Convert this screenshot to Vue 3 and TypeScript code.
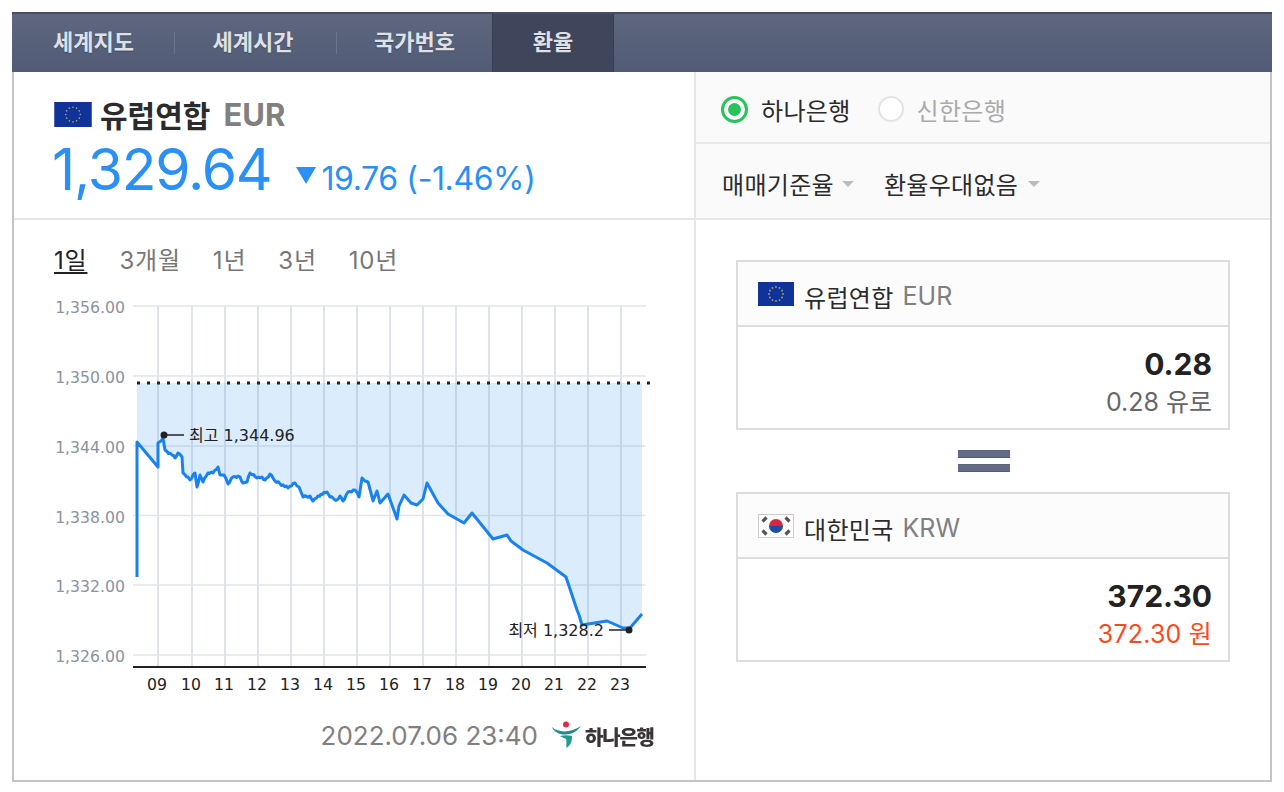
<script setup lang="ts">
import { computed } from 'vue'

const tabs = [
  { label: '세계지도', active: false },
  { label: '세계시간', active: false },
  { label: '국가번호', active: false },
  { label: '환율', active: true },
]
const periods = ['1일', '3개월', '1년', '3년', '10년']

const yTicks = [
  { y: 306, label: '1,356.00' },
  { y: 376, label: '1,350.00' },
  { y: 446, label: '1,344.00' },
  { y: 515.5, label: '1,338.00' },
  { y: 585, label: '1,332.00' },
  { y: 655, label: '1,326.00' },
]
const xTicks = ['09','10','11','12','13','14','15','16','17','18','19','20','21','22','23'].map((label, i) => ({
  label,
  x: i === 0 ? 158 : 192 + (i - 1) * 33,
}))

const pts: [number, number][] = [
  [137,442],[158,467],[158,443],[161,441],[163,438],[165,450],[172,455],[175,458],[178,453],[182,457],[183,473],[188,477],[190,480],[195,473],[197,487],[200,475],[203,482],[208,473],[213,473],[218,467],[220,475],[224,475],[228,484],[233,477],[240,477],[243,483],[247,482],[250,473],[257,478],[262,477],[265,480],[270,474],[275,481],[288,488],[295,483],[299,487],[303,497],[310,496],[313,501],[318,496],[327,492],[330,497],[337,500],[340,496],[343,501],[348,492],[355,490],[359,497],[362,478],[365,481],[368,482],[371,493],[373,501],[377,491],[380,503],[388,494],[397,519],[399,506],[404,495],[411,503],[417,505],[423,499],[427,483],[438,503],[448,514],[464,523],[472,513],[493,539],[507,535],[511,541],[523,550],[547,563],[566,577],[577,610],[579,615],[582,625],[607,621],[623,628],[630,628],[642,614],
]

// The reference line is a dense minute series: fine jitter is added in the busy morning stretch.
const dense = computed(() => {
  const out: [number, number][] = []
  pts.forEach((p, i) => {
    const next = pts[i + 1]
    out.push(p)
    if (!next || p[0] < 165 || p[0] > 355) return
    const steps = Math.floor((next[0] - p[0]) / 1.5)
    for (let s = 1; s < steps; s++) {
      const t = s / steps
      const wobble = ((s * 7 + i * 3) % 5) / 2 - 1
      out.push([p[0] + (next[0] - p[0]) * t, p[1] + (next[1] - p[1]) * t + wobble])
    }
  })
  return out
})

const linePts = computed(() => '137,577 ' + dense.value.map(p => p.join(',')).join(' '))
const fillPts = computed(() => '137,383 ' + pts.map(p => p.join(',')).join(' ') + ' 642,383')

const stars = Array.from({ length: 12 }, (_, i) => {
  const a = (i / 12) * Math.PI * 2
  return { cx: 18 + Math.cos(a) * 7, cy: 12 + Math.sin(a) * 7 }
})
</script>

<template>
  <div class="page">
    <div class="frame">
      <nav class="tabs">
        <template v-for="(t, i) in tabs" :key="t.label">
          <span class="tab" :class="{ active: t.active, ['tab' + i]: true }">{{ t.label }}</span>
        </template>
      </nav>
      <div class="grid">
        <section class="summary">
          <div class="title">
            <svg class="flag-big" viewBox="0 0 36 24">
              <rect width="36" height="24" fill="#0f3399" />
              <circle v-for="(s, i) in stars" :key="i" :cx="s.cx" :cy="s.cy" r="0.8" fill="#a9a968" />
            </svg>
            <span class="name">유럽연합</span>
            <span class="code">EUR</span>
          </div>
          <div class="rate">
            <span class="value">1,329.64</span>
            <svg class="down" viewBox="0 0 20 17"><path d="M0 0H20L10 17Z" fill="#2b90f5" /></svg>
            <span class="delta">19.76 (-1.46%)</span>
          </div>
        </section>

        <section class="options">
          <div class="opt-row banks">
            <span class="radio on"><i></i></span>
            <span class="bank">하나은행</span>
            <span class="radio"></span>
            <span class="bank off">신한은행</span>
          </div>
          <div class="opt-row selects">
            <span class="sel">매매기준율</span><span class="caret"></span>
            <span class="sel second">환율우대없음</span><span class="caret wide"></span>
          </div>
        </section>

        <section class="chart-col">
          <div class="periods">
            <span v-for="(p, i) in periods" :key="p" class="period" :class="{ cur: i === 0 }">{{ p }}</span>
          </div>
          <svg class="chart" width="682" height="412" viewBox="14 290 682 412">
            <line v-for="t in yTicks" :key="t.y" x1="133" x2="646" :y1="t.y" :y2="t.y" class="grid-line" />
            <line v-for="t in xTicks" :key="t.x" :x1="t.x" :x2="t.x" y1="306" y2="666" class="grid-v" />
            <polygon :points="fillPts" fill="#2b8ef0" fill-opacity="0.17" />
            <line x1="137" x2="650" y1="383" y2="383" class="dots" />
            <polyline :points="linePts" class="price" />
            <line x1="133" x2="646" y1="667" y2="667" class="axis" />
            <text v-for="t in yTicks" :key="t.label" x="125" :y="t.y + 7" text-anchor="end" class="y-label">{{ t.label }}</text>
            <text v-for="t in xTicks" :key="t.label" :x="t.x - 1" y="690" text-anchor="middle" class="x-label">{{ t.label }}</text>
            <line x1="164" x2="184" y1="435" y2="435" class="lead" />
            <circle cx="164" cy="435" r="3.5" fill="#222" />
            <text x="189" y="441" class="mark">최고 1,344.96</text>
            <line x1="609" x2="628" y1="630" y2="630" class="lead" />
            <circle cx="629" cy="630" r="3.5" fill="#222" />
            <text x="604" y="636" text-anchor="end" class="mark">최저 1,328.2</text>
          </svg>
          <div class="foot">
            <span class="stamp">2022.07.06 23:40</span>
            <span class="logo">
              <svg width="32" height="28" viewBox="0 0 32 28">
                <circle cx="15" cy="3.5" r="3" fill="#e5264f" />
                <path d="M1 6C7 12 20 12 30 5C25 12 19 13 15 13.500C9 14 3 11 1 6Z" fill="#1c8f8c" />
                <path d="M9 15C13 14 17 14 21 15C21 20 20 24 15.500 27C15 24 16 20 15 18C13 17 10 16 9 15Z" fill="#1c9a94" />
              </svg>
              <span class="logo-text">하나은행</span>
            </span>
          </div>
        </section>

        <section class="convert">
          <div class="card">
            <div class="card-head">
              <svg class="flag" viewBox="0 0 36 24">
                <rect width="36" height="24" fill="#0f3399" />
                <circle v-for="(s, i) in stars" :key="i" :cx="s.cx" :cy="s.cy" r="0.9" fill="#a9a968" />
              </svg>
              <span class="card-name">유럽연합</span>
              <span class="card-code">EUR</span>
            </div>
            <div class="card-body">
              <div class="amount">0.28</div>
              <div class="sub">0.28 유로</div>
            </div>
          </div>
          <div class="equals"><i></i><i></i></div>
          <div class="card">
            <div class="card-head">
              <svg class="flag" viewBox="0 0 36 24">
                <rect x="0.500" y="0.500" width="35" height="23" fill="#fff" stroke="#ccc" />
                <path d="M11 12A7 7 0 0 1 25 12Z" fill="#d8263c" />
                <path d="M11 12A7 7 0 0 0 25 12Z" fill="#1f4ba0" />
                <g stroke="#555" stroke-width="3.200">
                  <path d="M4.500 7.500L8.500 3.500" /><path d="M27.500 3.500L31.500 7.500" />
                  <path d="M4.500 16.500L8.500 20.500" /><path d="M27.500 20.500L31.500 16.500" />
                </g>
              </svg>
              <span class="card-name">대한민국</span>
              <span class="card-code">KRW</span>
            </div>
            <div class="card-body">
              <div class="amount">372.30</div>
              <div class="sub red">372.30 원</div>
            </div>
          </div>
        </section>
      </div>
    </div>
  </div>
</template>

<style>
html, body { margin: 0; background: #fff; }
</style>

<style scoped>
.page {
  padding: 12px;
  width: 1260px;
  font-family: Inter, "Noto Sans CJK KR", sans-serif;
  color: #222;
}
.frame {
  width: 1260px;
  height: 770px;
  box-sizing: border-box;
  border: 2px solid #c4c4c4;
  border-top: 0;
  display: flex;
  flex-direction: column;
}
.tabs {
  height: 60px;
  margin: 0 -2px;
  box-sizing: border-box;
  border-top: 2px solid #474e63;
  background: linear-gradient(#5e677f, #525b75);
  display: flex;
  flex: none;
}
.tab {
  box-sizing: border-box;
  width: 162px;
  text-align: center;
  line-height: 56px;
  font-size: 22px;
  font-weight: 700;
  color: #dfe1e6;
  position: relative;
  text-shadow: 0 1px 1px rgba(30, 35, 50, 0.35);
}
.tab0 { width: 163px; }
.tab1 { padding-right: 6px; }
.tab0::after, .tab1::after {
  content: '';
  position: absolute;
  right: 0;
  top: 18px;
  height: 22px;
  width: 1px;
  background: #6d758b;
}
.tab2 { width: 155px; }
.tab.active {
  width: 122px;
  background: #3f465c;
  box-shadow: inset 1px 0 #373d50, inset -1px 0 #373d50;
}
.grid {
  flex: 1;
  min-height: 0;
  display: grid;
  grid-template-columns: 682px 1fr;
  grid-template-rows: 148px 1fr;
}
.summary {
  box-sizing: border-box;
  border-bottom: 2px solid #e6e6e6;
  border-right: 2px solid #e6e6e6;
  padding: 24px 0 0 40px;
}
.title { display: flex; align-items: center; height: 36px; }
.flag-big { width: 38px; height: 25px; margin-right: 8px; }
.name { font-size: 30px; font-weight: 700; color: #2b2b2b; }
.code { font-size: 31px; font-weight: 700; color: #808080; margin-left: 13px; }
.rate { display: flex; align-items: baseline; height: 58px; margin-top: 3px; margin-left: -2px; color: #2b90f5; }
.value { font-size: 57px; font-weight: 400; letter-spacing: -1.2px; }
.down { width: 20px; height: 17px; margin: 0 6px 0 24px; transform: translateY(-6px); }
.delta { font-size: 32px; letter-spacing: -0.4px; }
.options {
  box-sizing: border-box;
  background: #fafafa;
  border-bottom: 2px solid #e6e6e6;
}
.opt-row { display: flex; align-items: center; padding-left: 25px; box-sizing: border-box; }
.banks { height: 72px; padding-top: 4px; border-bottom: 2px solid #e8e8e8; }
.selects { height: 74px; padding-left: 26px; padding-top: 4px; }
.radio {
  width: 22px;
  height: 22px;
  border-radius: 50%;
  border: 2px solid #e3e3e3;
  background: #fff;
  display: flex;
  align-items: center;
  justify-content: center;
  margin-right: 13px;
  flex: none;
}
.radio.on { border: 3px solid #2ac25b; width: 21px; height: 21px; }
.radio i { width: 13px; height: 13px; border-radius: 50%; background: #2ac25b; }
.bank { font-size: 24px; letter-spacing: 0.3px; margin-right: 27px; color: #2b2b2b; }
.bank.off { color: #aaa; }
.sel { font-size: 24px; letter-spacing: 0.3px; color: #2b2b2b; }
.sel.second { margin-left: 30px; }
.caret {
  width: 0;
  height: 0;
  border-left: 6.5px solid transparent;
  border-right: 6.5px solid transparent;
  border-top: 6px solid #bcbcbc;
  margin: 2px 0 0 8px;
}
.caret.wide { margin-left: 10px; }
.chart-col {
  border-right: 2px solid #e6e6e6;
  display: flex;
  flex-direction: column;
  min-height: 0;
}
.periods {
  height: 40px;
  margin-top: 18px;
  margin-bottom: 12px;
  padding-left: 40px;
  display: flex;
  gap: 32px;
  align-items: center;
  font-size: 24px;
  letter-spacing: 0.8px;
  color: #777;
  flex: none;
}
.period.cur { color: #222; text-decoration: underline; text-underline-offset: 3px; }
.chart { display: block; flex: none; }
.grid-line { stroke: #e3e5ea; stroke-width: 1.5; }
.grid-v { stroke: #dfe3ea; stroke-width: 2; }
.dots { stroke: #222; stroke-width: 3; stroke-dasharray: 3 7; }
.price { fill: none; stroke: #1a82ec; stroke-width: 3; stroke-linejoin: round; }
.axis { stroke: #222; stroke-width: 2; }
.lead { stroke: #222; stroke-width: 1.5; }
.y-label { font: 15.7px "DejaVu Sans", "Noto Sans CJK KR", sans-serif; fill: #8a93a0; }
.x-label { font: 15.7px "DejaVu Sans", "Noto Sans CJK KR", sans-serif; fill: #222; }
.mark { font: 16px "DejaVu Sans", "Noto Sans CJK KR", sans-serif; fill: #222; }
.foot {
  flex: 1;
  display: flex;
  align-items: center;
  justify-content: flex-end;
  padding: 0 39px 12px 0;
}
.stamp { font-size: 26px; color: #808080; }
.logo { display: flex; align-items: center; margin-left: 13px; }
.logo-text {
  font-size: 20px;
  font-weight: 900;
  letter-spacing: -1.2px;
  color: #3a3436;
  width: 70px;
  margin-left: 2px;
  white-space: nowrap;
  filter: blur(0.4px);
  padding-top: 2px;
}
.convert { padding: 40px 40px 0 40px; }
.card { border: 2px solid #ddd; height: 170px; box-sizing: border-box; }
.card-head {
  height: 65px;
  box-sizing: border-box;
  background: #fcfcfc;
  border-bottom: 2px solid #ddd;
  display: flex;
  align-items: center;
  padding: 5px 0 0 20px;
}
.flag { width: 36px; height: 24px; margin: -5px 10px 0 0; }
.card-name { font-size: 24px; letter-spacing: 0.3px; color: #2b2b2b; }
.card-code { font-size: 25px; color: #808080; margin-left: 9px; }
.card-body { text-align: right; padding: 17px 16px 0 0; }
.amount { font-size: 30px; font-weight: 700; line-height: 40px; color: #222; }
.sub { font-size: 25px; line-height: 36px; color: #666; }
.sub.red { color: #fa4a22; letter-spacing: 0.2px; }
.equals {
  height: 62px;
  padding-left: 2px;
  display: flex;
  flex-direction: column;
  align-items: center;
  justify-content: center;
  gap: 6px;
}
.equals i {
  width: 52px;
  height: 8px;
  background: #636c87;
  box-shadow: inset 0 1px #5a6380, inset 0 -1px #535c78;
  display: block;
}
</style>
